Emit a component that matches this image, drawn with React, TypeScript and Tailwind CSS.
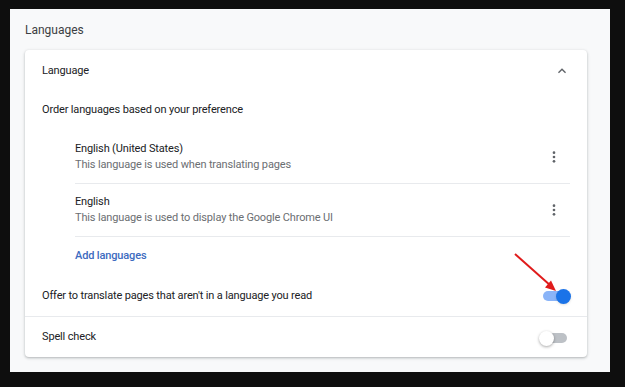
import React from "react";

const MoreIcon: React.FC = () => (
  <svg width="16" height="16" viewBox="0 0 24 24" className="text-[#5f6368]">
    <circle cx="12" cy="5.5" r="2" fill="currentColor" />
    <circle cx="12" cy="12" r="2" fill="currentColor" />
    <circle cx="12" cy="18.5" r="2" fill="currentColor" />
  </svg>
);

const Toggle: React.FC<{ on: boolean }> = ({ on }) => (
  <div className="relative w-[28px] h-[14px] flex items-center">
    <div
      className={
        on
          ? "w-[26px] h-[10px] rounded-full bg-[#8ab4f8] ml-[1px]"
          : "w-[24px] h-[10px] rounded-full bg-[#bdc1c6] ml-[3px]"
      }
    />
    <div
      className={
        on
          ? "absolute right-[-1px] top-[0px] w-[15px] h-[15px] rounded-full bg-[#1a73e8] shadow"
          : "absolute left-[-1px] top-[0px] w-[15px] h-[15px] rounded-full bg-white shadow-[0_1px_3px_rgba(0,0,0,0.35)]"
      }
    />
  </div>
);

const LanguageItem: React.FC<{ name: string; desc: string; tall?: boolean }> = ({
  name,
  desc,
  tall,
}) => (
  <div
    className={
      "flex items-center justify-between pr-[8px] border-b border-[#e8eaed] " +
      (tall ? "h-[54px]" : "h-[53px]")
    }
  >
    <div className="flex flex-col leading-[16px]">
      <span className="text-[#202124]">{name}</span>
      <span className="text-[#6b6e72]">{desc}</span>
    </div>
    <MoreIcon />
  </div>
);

export default function App() {
  return (
    <div
      className="w-[625px] h-[387px] bg-[#0e0e0e] pt-[9px] pl-[10px] text-[11px] tracking-[-0.15px]"
      style={{ fontFamily: "Roboto, 'Liberation Sans', sans-serif" }}
    >
      <div className="w-[600px] h-[363px] bg-[#f8f9fa] px-[15px]">
        <div className="h-[41px] flex items-center text-[#3c4043] text-[12px] tracking-normal pt-[1px]">
          Languages
        </div>
        <div className="w-[562px] h-[307px] bg-white rounded-[4px] shadow-[0_1px_2px_rgba(60,64,67,0.25),0_1px_3px_1px_rgba(60,64,67,0.1)]">
          <div className="h-[41px] flex items-center justify-between pl-[17px] pr-[17px] pt-[1px] text-[#202124]">
            <span>Language</span>
            <svg width="16" height="16" viewBox="0 0 24 24" className="text-[#5f6368]">
              <path d="M7.41 15.41 12 10.83l4.59 4.58L18 14l-6-6-6 6z" fill="currentColor" />
            </svg>
          </div>
          <div className="h-[39px] flex items-center pl-[17px] text-[#202124]">
            Order languages based on your preference
          </div>
          <div className="pl-[50px] pr-[17px]">
            <LanguageItem
              name="English (United States)"
              desc="This language is used when translating pages"
              tall
            />
            <LanguageItem
              name="English"
              desc="This language is used to display the Google Chrome UI"
            />
            <div className="h-[39px] flex items-center text-[#3d6bc0] font-medium">
              Add languages
            </div>
          </div>
          <div className="relative h-[41px] flex items-center justify-between pl-[17px] pr-[17px] border-b border-[#e8eaed] text-[#202124]">
            <span>Offer to translate pages that aren't in a language you read</span>
            <Toggle on />
            <svg
              className="absolute left-[488px] top-[-24px]"
              width="46"
              height="44"
              viewBox="0 0 46 44"
            >
              <line x1="2" y1="2" x2="38" y2="34" stroke="#e01b1b" strokeWidth="2" />
              <polygon points="43,39 32,35.5 38,28.5" fill="#e01b1b" />
            </svg>
          </div>
          <div className="h-[40px] flex items-center justify-between pl-[17px] pr-[19px] pt-[1px] text-[#202124]">
            <span>Spell check</span>
            <Toggle on={false} />
          </div>
        </div>
      </div>
    </div>
  );
}
